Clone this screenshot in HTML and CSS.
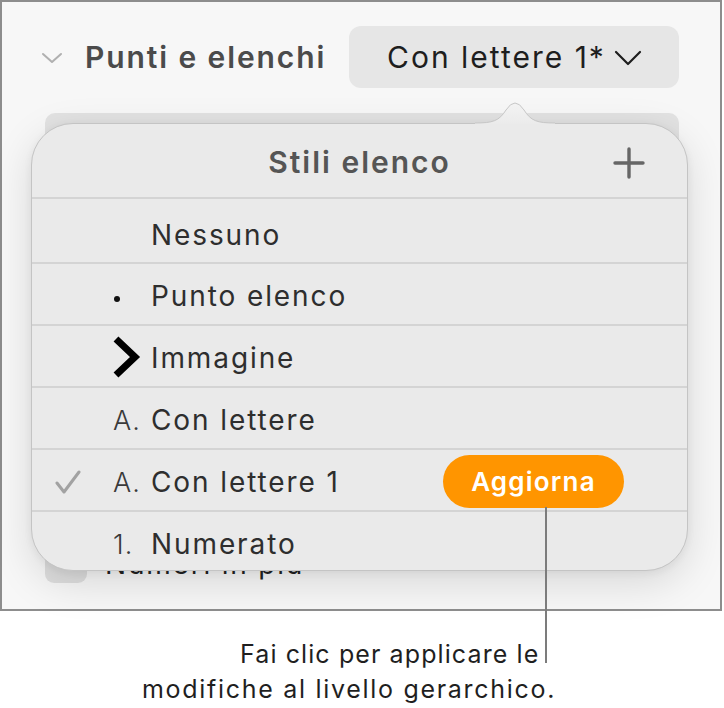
FILE: index.html
```html
<!DOCTYPE html>
<html lang="it">

<head>
    <meta charset="UTF-8">
    <meta name="viewport" content="width=device-width, initial-scale=1.0">
    <title>Stili elenco</title>

    <link rel="stylesheet" href="styles.css">
</head>

<body>

    <div class="stage">
        <section class="frame">
            <div class="section-head">
                <svg class="disclosure" viewBox="0 0 22 12" width="22" height="12">
                    <path d="M2 2l9 8 9-8" fill="none" stroke="currentColor" stroke-width="2" stroke-linecap="round" stroke-linejoin="round"></path>
                </svg>
                <h3 class="section-title">Punti e elenchi</h3>
                <button class="popup">
                    Con lettere 1*
                    <svg viewBox="0 0 28 16" width="28" height="16">
                        <path d="M2 2l12 12 12-12" fill="none" stroke="currentColor" stroke-width="2.2" stroke-linecap="round" stroke-linejoin="round"></path>
                    </svg>
                </button>
            </div>

            <div class="field-behind"></div>

            <div class="check-row">
                <span class="checkbox"></span>
                <span>Numeri in più</span>
            </div>

            <!-- popover aperto sopra il pannello -->
            <div class="popover">
                <svg class="popover-arrow" viewBox="0 0 80 30" width="80" height="30">
                    <defs>
                        <linearGradient id="arrowFill" x1="0" y1="0" x2="0" y2="1">
                            <stop offset="0" stop-color="#f3f3f3"></stop>
                            <stop offset="1" stop-color="#ebebeb"></stop>
                        </linearGradient>
                    </defs>
                    <path d="M0 30V29C18 29 24 27 31 16Q40 2 49 16C56 27 62 29 80 29V30Z" fill="url(#arrowFill)"></path>
                    <path d="M0 29C18 29 24 27 31 16Q40 2 49 16C56 27 62 29 80 29" fill="none" stroke="#c6c6c6" stroke-width="1"></path>
                </svg>

                <div class="popover-head">
                    <span class="popover-title">Stili elenco</span>
                    <svg class="add" viewBox="0 0 32 32" width="32" height="32">
                        <path d="M16 2v28M2 16h28" stroke="currentColor" stroke-width="3.4" stroke-linecap="round"></path>
                    </svg>
                </div>

                <ul class="style-list">
                    <li>
                        <span class="check-slot"></span>
                        <span class="marker"></span>
                        <span class="name">Nessuno</span>
                    </li>
                    <li>
                        <span class="check-slot"></span>
                        <span class="marker"><span class="dot"></span></span>
                        <span class="name">Punto elenco</span>
                    </li>
                    <li>
                        <span class="check-slot"></span>
                        <span class="marker">
                            <svg viewBox="0 0 28 42" width="28" height="42">
                                <path d="M3 3l19 18-19 18" fill="none" stroke="#000" stroke-width="7" stroke-linejoin="miter"></path>
                            </svg>
                        </span>
                        <span class="name">Immagine</span>
                    </li>
                    <li>
                        <span class="check-slot"></span>
                        <span class="marker marker-text">A.</span>
                        <span class="name">Con lettere</span>
                    </li>
                    <li>
                        <span class="check-slot">
                            <svg viewBox="0 0 26 24" width="26" height="24">
                                <path d="M2 13l7 9L24 2" fill="none" stroke="currentColor" stroke-width="3" stroke-linecap="round" stroke-linejoin="round"></path>
                            </svg>
                        </span>
                        <span class="marker marker-text">A.</span>
                        <span class="name">Con lettere 1</span>
                        <button class="update">Aggiorna</button>
                    </li>
                    <li>
                        <span class="check-slot"></span>
                        <span class="marker marker-text">1.</span>
                        <span class="name">Numerato</span>
                    </li>
                </ul>
            </div>
        </section>

        <span class="leader"></span>

        <p class="caption">
            <span class="caption-first">Fai clic per applicare le</span>
            modifiche al livello gerarchico.
        </p>
    </div>

</body>

</html>
```

FILE: styles.css
```css
*,
*::before,
*::after {
    box-sizing: border-box;
}

body {
    margin: 0;
    background: #fff;
    font-family: Inter, "Noto Sans", sans-serif;
    color: #2e2e2e;
}

.stage {
    position: relative;
    width: 724px;
    height: 708px;
    overflow: hidden;
}

.frame {
    position: relative;
    width: 722px;
    height: 611px;
    border: 2px solid #8d8d8d;
    background: #f7f7f7;
}

/* ---- pannello sotto il popover ---- */

.section-head {
    display: flex;
    align-items: center;
    padding: 24px 41px 0 39px;
}

.disclosure {
    color: #b0b0b0;
    margin-top: 2px;
}

.section-title {
    margin: 0 0 0 22px;
    font-size: 30px;
    font-weight: 600;
    color: #4b4b4b;
    letter-spacing: 1.9px;
}

.popup {
    margin-left: auto;
    width: 330px;
    height: 62px;
    border: 0;
    border-radius: 12px;
    background: #e6e6e6;
    font-family: inherit;
    font-size: 30px;
    letter-spacing: 2px;
    color: #1e1e1e;
    display: flex;
    align-items: center;
    gap: 8px;
    padding: 0 0 0 38px;
}

.popup svg {
    margin-top: 2px;
}

.field-behind {
    margin: 25px 0 0 43px;
    width: 634px;
    height: 80px;
    border-radius: 10px;
    background: #e2e2e2;
}

.check-row {
    display: flex;
    align-items: center;
    gap: 18px;
    margin: 352px 0 0 43px;
    font-size: 28px;
    letter-spacing: 1.8px;
    color: #222;
}

.checkbox {
    width: 42px;
    height: 38px;
    border-radius: 9px;
    background: #dedede;
}

/* ---- popover ---- */

.popover {
    position: absolute;
    left: 29px;
    top: 121px;
    width: 657px;
    height: 448px;
    border: 1px solid #c4c4c4;
    border-radius: 42px;
    background: #eaeaea;
    box-shadow: 0 12px 40px rgba(0, 0, 0, 0.13), 0 2px 8px rgba(0, 0, 0, 0.06);
}

.popover-arrow {
    position: absolute;
    left: 443px;
    top: -30px;
    display: block;
}

.popover-head {
    position: relative;
    height: 75px;
    border-bottom: 2px solid #d4d4d4;
    display: flex;
    align-items: center;
    justify-content: center;
}

.popover-title {
    font-size: 30px;
    font-weight: 600;
    letter-spacing: 2px;
    color: #555;
    margin-top: 2px;
}

.add {
    position: absolute;
    right: 42px;
    top: 23px;
    color: #666;
}

.style-list {
    list-style: none;
    margin: 0;
    padding: 0;
}

.style-list>li {
    display: flex;
    align-items: center;
    height: 62px;
    border-bottom: 2px solid #d4d4d4;
    font-size: 28px;
    letter-spacing: 1.9px;
    padding-top: 3px;
}

.style-list>li:first-child {
    height: 65px;
    padding-top: 8px;
}

.style-list>li:last-child {
    border-bottom: 0;
    height: 60px;
}

.check-slot {
    width: 81px;
    padding-left: 23px;
    color: #a2a2a2;
    display: flex;
}

.marker {
    width: 38px;
    display: flex;
    align-items: center;
}

.marker svg {
    display: block;
    margin-top: -2px;
}

.dot {
    width: 6px;
    height: 6px;
    border-radius: 50%;
    background: #111;
    margin: 6px 0 0 1px;
}

.marker-text {
    font-size: 27px;
    font-weight: 300;
    letter-spacing: 1px;
    color: #3a3a3a;
    margin-top: 2px;
}

.name {
    color: #2e2e2e;
}

.update {
    margin: 0 63px 0 auto;
    width: 181px;
    height: 53px;
    border: 0;
    border-radius: 27px;
    background: #ff9500;
    color: #fff;
    font-family: inherit;
    font-size: 26px;
    font-weight: 600;
    letter-spacing: 1.2px;
    padding: 0;
}

/* ---- didascalia ---- */

.leader {
    position: absolute;
    left: 545px;
    top: 507px;
    width: 2px;
    height: 156px;
    background: #7c7c7c;
}

.caption {
    margin: 26px 0 0 142px;
    font-size: 25px;
    letter-spacing: 1.7px;
    line-height: 35px;
    color: #1f1f1f;
}

.caption-first {
    display: block;
    padding-left: 98px;
    letter-spacing: 1.1px;
}
```
